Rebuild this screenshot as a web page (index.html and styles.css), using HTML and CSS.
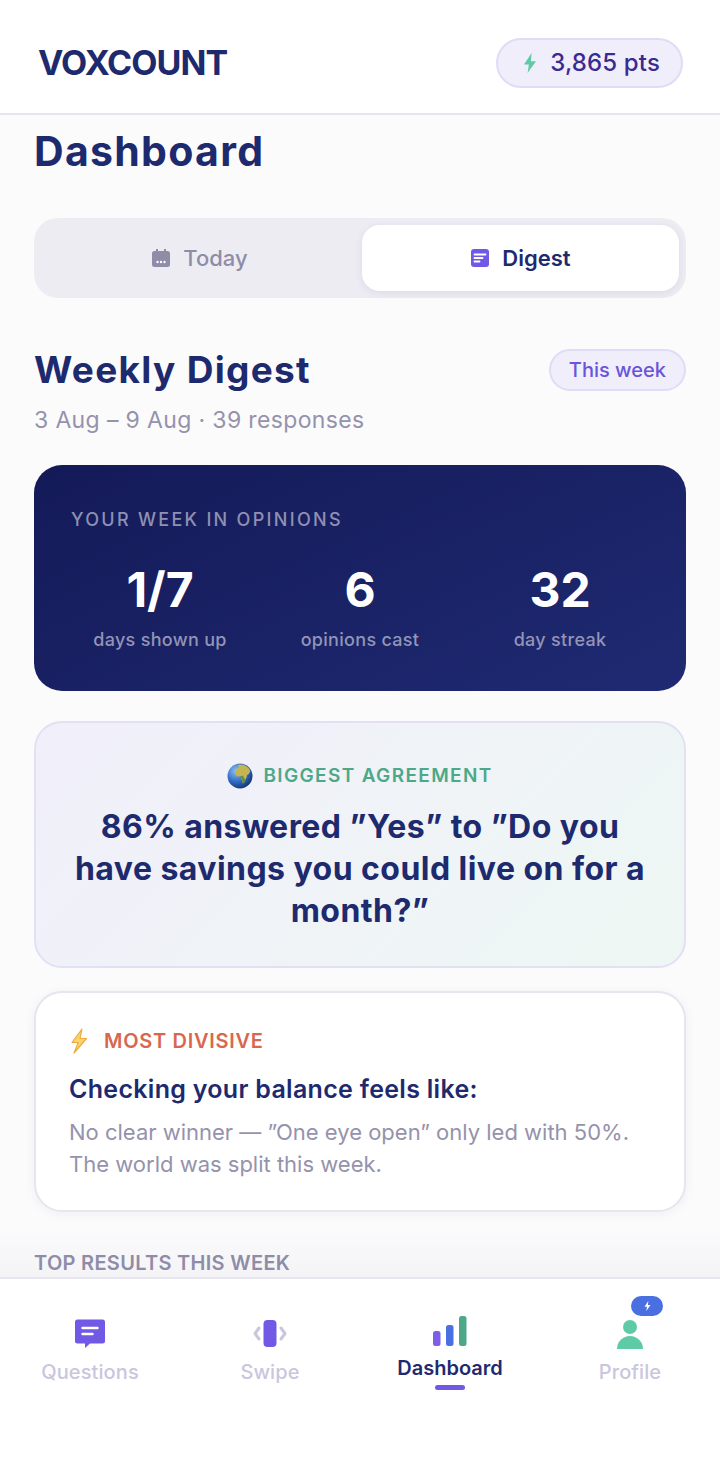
FILE: index.html
```html
<!DOCTYPE html>
<html lang="en">

<head>
  <meta charset="UTF-8">
  <meta name="viewport" content="width=device-width, initial-scale=1.0">
  <title>Voxcount Dashboard</title>
  <link rel="stylesheet" href="styles.css">
</head>

<body>
  <div class="app">
    <header class="topbar">
      <div class="logo">VOXCOUNT</div>
      <div class="points">
        <svg class="points-bolt" viewBox="0 0 14 20"><path d="M8.6 0 1 11.6h4.9L4.6 20 13 8.2H7.900z"/></svg>
        <span>3,865 pts</span>
      </div>
    </header>

    <main class="content">
      <h1 class="page-title">Dashboard</h1>

      <div class="tabs">
        <div class="tab">
          <svg class="tab-icon" viewBox="0 0 20 20">
            <path fill="#8f8ca8" d="M5 1h2v2h6V1h2v2h1.500A2.500 2.500 0 0 1 19 5.500v11a2.500 2.500 0 0 1-2.500 2.500h-13A2.500 2.500 0 0 1 1 16.500v-11A2.500 2.500 0 0 1 3.500 3H5z"/>
            <circle cx="6.500" cy="14" r="1.200" fill="#fff"/><circle cx="10" cy="14" r="1.200" fill="#fff"/><circle cx="13.500" cy="14" r="1.200" fill="#fff"/>
          </svg>
          <span>Today</span>
        </div>
        <div class="tab tab-active">
          <svg class="tab-icon" viewBox="0 0 20 20">
            <rect x="1" y="1" width="18" height="18" rx="3" fill="#7159e5"/>
            <path d="M4.500 6.500h11M4.500 10h8M4.500 13.500h5" stroke="#fff" stroke-width="1.800" fill="none" stroke-linecap="round"/>
          </svg>
          <span>Digest</span>
        </div>
      </div>

      <div class="digest-head">
        <h2 class="digest-title">Weekly Digest</h2>
        <span class="week-chip">This week</span>
      </div>
      <p class="digest-range">3 Aug – 9 Aug · 39 responses</p>

      <section class="hero">
        <div class="hero-label">YOUR WEEK IN OPINIONS</div>
        <div class="stats">
          <div class="stat"><div class="stat-value">1/7</div><div class="stat-label">days shown up</div></div>
          <div class="stat"><div class="stat-value">6</div><div class="stat-label">opinions cast</div></div>
          <div class="stat"><div class="stat-value">32</div><div class="stat-label">day streak</div></div>
        </div>
      </section>

      <section class="agree">
        <div class="agree-label">
          <svg class="globe" viewBox="0 0 26 26">
            <defs>
              <radialGradient id="sea" cx="0.35" cy="0.3" r="0.8">
                <stop offset="0" stop-color="#8fc4f2"/>
                <stop offset="0.55" stop-color="#2f68c4"/>
                <stop offset="1" stop-color="#142a66"/>
              </radialGradient>
            </defs>
            <circle cx="13" cy="13" r="12.500" fill="url(#sea)"/>
            <path fill="#c4b552" d="M11 2.200c3-.8 6.500-.3 9 1.500 1.600 1.200 2.800 2.800 3.300 4.600l-1.200 2.400-1.900 1.200-.9 3-1.800 3.600-2 1.500-.9-3.400-.6-2.900-2.300-.3-3.200-1.500-.8-3.100 1.900-3 2.300-.7z"/>
            <path fill="#5f8f45" d="M11.500 14l2.900.4.600 2.900.9 3.400 2-1.500 1.200-2.400-2.300-1.800-.6-2.400z"/>
          </svg>
          <span>BIGGEST AGREEMENT</span>
        </div>
        <p class="agree-text">86% answered ”Yes” to ”Do you have savings you could live on for a month?”</p>
      </section>

      <section class="divisive">
        <div class="divisive-label">
          <svg class="divisive-bolt" viewBox="0 0 20 26"><path d="M13 1 3 14.500h6.200L5 25l12.500-14.500h-6.500z" fill="#fbd46b" stroke="#eeaa3f" stroke-width="1.200" stroke-linejoin="round"/></svg>
          <span>MOST DIVISIVE</span>
        </div>
        <h3 class="divisive-title">Checking your balance feels like:</h3>
        <p class="divisive-text">No clear winner — ”One eye open” only led with 50%. The world was split this week.</p>
      </section>

      <h4 class="results-label">TOP RESULTS THIS WEEK</h4>
    </main>

    <nav class="tabbar">
      <div class="nav-item">
        <svg class="nav-icon" viewBox="0 0 34 32">
          <path fill="#7159e5" d="M4.500 1.500h25a2.500 2.500 0 0 1 2.500 2.500v19a2.500 2.500 0 0 1-2.500 2.500H17l-5 4.500v-4.500H4.500A2.500 2.500 0 0 1 2 23V4a2.500 2.500 0 0 1 2.500-2.500z"/>
          <path d="M9.500 10h15M9.500 16h10" stroke="#fff" stroke-width="2.400" stroke-linecap="round"/>
        </svg>
        <span class="nav-label">Questions</span>
      </div>
      <div class="nav-item">
        <svg class="nav-icon" viewBox="0 0 34 32">
          <rect x="10.500" y="2" width="13" height="27" rx="4" fill="#7159e5"/>
          <path d="M6 10 2 15.500 6 21M28 10l4 5.500L28 21" fill="none" stroke="#c9c6de" stroke-width="3" stroke-linejoin="round" stroke-linecap="round"/>
        </svg>
        <span class="nav-label">Swipe</span>
      </div>
      <div class="nav-item nav-active">
        <svg class="nav-icon" viewBox="0 0 34 32">
          <rect x="0" y="15" width="7.500" height="15" rx="2.500" fill="#7c5ee8"/>
          <rect x="13" y="9" width="7.500" height="21" rx="2.500" fill="#4a6fe0"/>
          <rect x="26" y="0" width="7.500" height="30" rx="2.500" fill="#4da888"/>
        </svg>
        <span class="nav-label">Dashboard</span>
        <span class="nav-bar"></span>
      </div>
      <div class="nav-item">
        <span class="nav-badge">
          <svg class="badge-bolt" viewBox="0 0 14 20"><path d="M8.600 0 1 11.600h4.900L4.600 20 13 8.200H7.900z"/></svg>
        </span>
        <svg class="nav-icon" viewBox="0 0 34 32">
          <circle cx="17" cy="9" r="7" fill="#5fcba6"/>
          <path d="M4 31a13 13 0 0 1 26 0z" fill="#5fcba6"/>
        </svg>
        <span class="nav-label">Profile</span>
      </div>
    </nav>
  </div>
</body>

</html>
```

FILE: styles.css
```css
* {
  box-sizing: border-box;
}

body {
  font-family: Inter, "Open Sans", sans-serif;
  background-color: #fbfbfc;
  color: #1e2a6e;
  margin: 0;
  padding: 0;
}

.app {
  display: flex;
  flex-direction: column;
  height: 1481px;
  overflow: hidden;
}

/* Top bar */
.topbar {
  display: flex;
  justify-content: space-between;
  align-items: center;
  height: 115px;
  padding: 12px 37px 0 38px;
  background: #fff;
  border-bottom: 2px solid #e6e5f0;
  flex-shrink: 0;
}

.logo {
  font-size: 34px;
  font-weight: 700;
  letter-spacing: -0.900px;
  color: #1e2a6e;
}

.points {
  display: flex;
  align-items: center;
  gap: 13px;
  height: 50px;
  padding: 0 21px 0 25px;
  border: 2px solid #dfdcf5;
  border-radius: 25px;
  background: #f0eefb;
  font-size: 24px;
  letter-spacing: 0.150px;
  font-weight: 500;
  color: #3b2a8f;
}

.points-bolt {
  width: 14px;
  height: 20px;
  fill: #5fcba6;
}

/* Scroll area */
.content {
  flex: 1;
  overflow: hidden;
  padding: 0 34px;
  min-height: 0;
  background: linear-gradient(#fbfbfc calc(100% - 50px), #f4f4f7);
}

.page-title {
  margin: 9px 0 0;
  font-size: 41px;
  line-height: 54px;
  font-weight: 700;
  letter-spacing: 1.300px;
  color: #1e2a6e;
}

.tabs {
  display: flex;
  gap: 4px;
  height: 80px;
  margin-top: 40px;
  padding: 7px;
  border-radius: 24px;
  background: #edecf3;
}

.tab {
  flex: 1;
  display: flex;
  align-items: center;
  justify-content: center;
  gap: 12px;
  border-radius: 18px;
  font-size: 22px;
  font-weight: 500;
  color: #8f8ca8;
}

.tab-active {
  background: #fff;
  color: #1e2a6e;
  font-weight: 600;
  box-shadow: 0 2px 8px rgba(30, 42, 110, 0.08);
}

.tab-icon {
  width: 20px;
  height: 20px;
}

.digest-head {
  display: flex;
  justify-content: space-between;
  align-items: center;
  margin-top: 48px;
}

.digest-title {
  margin: 0;
  font-size: 37px;
  line-height: 48px;
  font-weight: 700;
  letter-spacing: 1.300px;
  color: #1e2a6e;
}

.week-chip {
  height: 42px;
  line-height: 38px;
  padding: 0 18px;
  border: 2px solid #dfdcf5;
  border-radius: 21px;
  background: #f0eefb;
  font-size: 20px;
  font-weight: 500;
  color: #6a55d8;
}

.digest-range {
  margin: 11px 0 0;
  font-size: 23px;
  line-height: 30px;
  letter-spacing: 0.360px;
  color: #9592ac;
}

/* Dark summary card */
.hero {
  height: 226px;
  margin-top: 30px;
  padding: 43px 37px 0;
  border-radius: 28px;
  background: linear-gradient(155deg, #141a58, #1f2a72);
}

.hero-label {
  font-size: 18px;
  line-height: 24px;
  font-weight: 500;
  letter-spacing: 2.300px;
  color: #8f90b2;
}

.stats {
  display: grid;
  grid-template-columns: 1fr 1fr 1fr;
  margin: 30px -11px 0;
  text-align: center;
}

.stat-value {
  font-size: 48px;
  line-height: 56px;
  font-weight: 700;
  color: #fff;
}

.stat-label {
  margin-top: 10px;
  font-size: 18px;
  line-height: 24px;
  font-weight: 500;
  letter-spacing: 0.300px;
  color: #9394b6;
}

/* Agreement card */
.agree {
  height: 247px;
  margin-top: 30px;
  padding: 39px 36px 0;
  border: 2px solid #e2e0f4;
  border-radius: 28px;
  background: linear-gradient(135deg, #f1effa, #eef7f4);
  text-align: center;
}

.agree-label {
  display: flex;
  justify-content: center;
  align-items: center;
  gap: 10px;
  font-size: 19px;
  line-height: 28px;
  font-weight: 600;
  letter-spacing: 1.350px;
  color: #4da888;
}

.globe {
  width: 26px;
  height: 26px;
}

.agree-text {
  margin: 16px -8px 0;
  font-size: 32px;
  line-height: 42px;
  font-weight: 700;
  letter-spacing: 0.450px;
  color: #1e2a6e;
}

/* Divisive card */
.divisive {
  height: 221px;
  margin-top: 23px;
  padding: 34px 33px 0;
  border: 2px solid #e6e5f0;
  border-radius: 28px;
  background: #fff;
  box-shadow: 0 2px 12px rgba(30, 42, 110, 0.05);
}

.divisive-label {
  display: flex;
  align-items: center;
  gap: 15px;
  font-size: 20px;
  line-height: 28px;
  font-weight: 600;
  letter-spacing: 0.700px;
  color: #d9674f;
}

.divisive-bolt {
  width: 20px;
  height: 26px;
}

.divisive-title {
  margin: 18px 0 0;
  font-size: 25px;
  line-height: 32px;
  font-weight: 600;
  letter-spacing: 0.300px;
  color: #1e2a6e;
}

.divisive-text {
  margin: 11px 0 0;
  font-size: 22px;
  line-height: 32px;
  color: #9592ac;
}

.results-label {
  margin: 38px 0 0;
  font-size: 20px;
  line-height: 26px;
  font-weight: 600;
  letter-spacing: 0.300px;
  color: #8f8ca8;
}

/* Bottom navigation */
.tabbar {
  display: grid;
  grid-template-columns: repeat(4, 1fr);
  height: 204px;
  padding-top: 39px;
  background: #fff;
  border-top: 2px solid #e6e5f0;
  flex-shrink: 0;
}

.nav-item {
  position: relative;
  display: flex;
  flex-direction: column;
  align-items: center;
}

.nav-icon {
  width: 34px;
  height: 32px;
}

.nav-label {
  margin-top: 8px;
  font-size: 20px;
  line-height: 28px;
  font-weight: 500;
  letter-spacing: 0.100px;
  color: #c9c6de;
}

.nav-active .nav-icon {
  margin-top: -2px;
}

.nav-active .nav-label {
  margin-top: 6px;
  font-weight: 600;
  letter-spacing: 0;
  color: #1e2a6e;
}

.nav-bar {
  width: 30px;
  height: 5px;
  margin-top: 3px;
  border-radius: 3px;
  background: #7159e5;
}

.nav-badge {
  position: absolute;
  top: -22px;
  left: 91px;
  display: flex;
  align-items: center;
  justify-content: center;
  width: 32px;
  height: 20px;
  border-radius: 10px;
  background: #4a6fe0;
}

.badge-bolt {
  width: 7px;
  height: 10px;
  fill: #fff;
}
```
